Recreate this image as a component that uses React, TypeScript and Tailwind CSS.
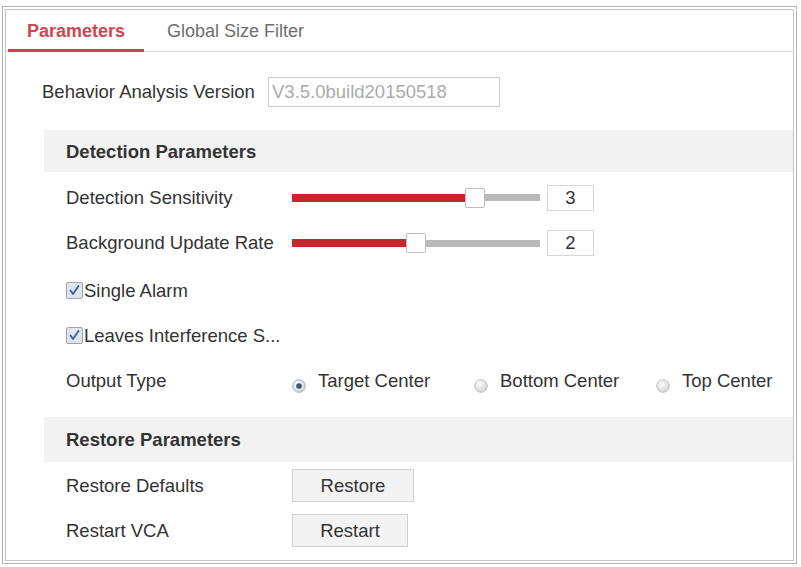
import React from "react";

const font = { fontFamily: '"Liberation Sans", Arial, sans-serif' };

function Slider({ fill }: { fill: number }) {
  return (
    <div className="relative w-[248px] h-[20px] flex items-center">
      <div className="w-full h-[7px] bg-[#b9b9b9]" />
      <div className="absolute left-0 top-[6px] h-[8px] bg-[#c7262e]" style={{ width: fill }} />
      <div
        className="absolute top-0 w-[20px] h-[20px] bg-white border border-[#bdbdbd] rounded-[2px]"
        style={{ left: fill - 1 }}
      />
    </div>
  );
}

function Checkbox() {
  return (
    <span className="w-[17px] h-[17px] border border-[#9ea7b3] bg-[#dfe5ec] rounded-[2px] flex items-center justify-center">
      <svg width="13" height="13" viewBox="0 0 13 13">
        <path d="M2.5 6.5 L5 10 L10.5 2" fill="none" stroke="#3b5f9c" strokeWidth="1.8" strokeLinecap="round" strokeLinejoin="round" />
      </svg>
    </span>
  );
}

function Radio({ on }: { on?: boolean }) {
  return (
    <svg width="14" height="14" viewBox="0 0 14 14" className="mt-[10px]">
      <defs>
        <radialGradient id={on ? "rg1" : "rg0"} cx="0.4" cy="0.35" r="0.7">
          <stop offset="0" stopColor="#ffffff" />
          <stop offset="1" stopColor={on ? "#c9d0d6" : "#cfcfcf"} />
        </radialGradient>
      </defs>
      <circle cx="7" cy="7" r="6.3" fill={`url(#${on ? "rg1" : "rg0"})`} stroke={on ? "#a8b2bb" : "#c4c4c4"} strokeWidth="1" />
      {on && <circle cx="7" cy="7" r="2.8" fill="#3e5466" />}
    </svg>
  );
}

function Row({ label, children, h = "h-[45px]" }: { label: string; children?: React.ReactNode; h?: string }) {
  return (
    <div className={`flex items-center ${h}`}>
      <div className="w-[226px] shrink-0">{label}</div>
      {children}
    </div>
  );
}

export default function App() {
  return (
    <div className="w-[801px] h-[567px] bg-white text-[18.5px] text-[#333333]" style={font}>
      <div className="ml-[2px] pt-[6px]">
        <div className="w-[795px] h-[558px] border border-[#b4b4b4] p-[2px]">
          <div className="w-full h-full border border-[#c4c4c4] flex flex-col">
            {/* Tabs */}
            <div className="flex items-end h-[42px] border-b border-[#dddddd] pl-[2px]">
              <div className="w-[136px] h-[42px] flex items-center justify-center pt-[3px] border-b-[3px] border-[#d0404a] mb-[-1px] text-[#d04650] font-bold text-[18px]">
                Parameters
              </div>
              <div className="h-[42px] flex items-center ml-[23px] text-[#6e6e6e] pt-[2px] text-[18px]">Global Size Filter</div>
            </div>

            {/* Version */}
            <div className="flex items-center pl-[36px] mt-[25px]">
              <span className="w-[226px] shrink-0">Behavior Analysis Version</span>
              <div className="w-[232px] h-[30px] border border-[#cccccc] flex items-center pl-[3px] text-[#ababab]">
                V3.5.0build20150518
              </div>
            </div>

            {/* Detection header */}
            <div className="ml-[38px] mt-[23px] h-[42px] bg-[#f2f2f2] flex items-center pl-[22px] pt-[1px] font-bold">
              Detection Parameters
            </div>

            <div className="ml-[60px] mt-[3px]">
              <Row label="Detection Sensitivity">
                <Slider fill={174} />
                <div className="ml-[7px] w-[47px] h-[26px] border border-[#d6d6d6] flex items-center justify-center">3</div>
              </Row>
              <Row label="Background Update Rate" h="h-[46px]">
                <Slider fill={115} />
                <div className="ml-[7px] w-[47px] h-[26px] border border-[#d6d6d6] flex items-center justify-center">2</div>
              </Row>
              <div className="flex items-center h-[47px] pt-[2px]">
                <Checkbox />
                <span className="ml-[1px]">Single Alarm</span>
              </div>
              <div className="flex items-center h-[45px]">
                <Checkbox />
                <span className="ml-[1px]">Leaves Interference S...</span>
              </div>
              <Row label="Output Type">
                <div className="flex items-center w-[182px]">
                  <Radio on />
                  <span className="ml-[12px]">Target Center</span>
                </div>
                <div className="flex items-center w-[182px]">
                  <Radio />
                  <span className="ml-[12px]">Bottom Center</span>
                </div>
                <div className="flex items-center">
                  <Radio />
                  <span className="ml-[12px]">Top Center</span>
                </div>
              </Row>
            </div>

            {/* Restore header */}
            <div className="ml-[38px] mt-[14px] h-[45px] bg-[#f2f2f2] flex items-center pl-[22px] pt-[1px] font-bold">
              Restore Parameters
            </div>

            <div className="ml-[60px] mt-[1px]">
              <Row label="Restore Defaults">
                <div className="w-[122px] h-[33px] bg-[#f3f3f3] border border-[#d2d2d2] flex items-center justify-center">Restore</div>
              </Row>
              <Row label="Restart VCA">
                <div className="w-[116px] h-[33px] bg-[#f3f3f3] border border-[#d2d2d2] flex items-center justify-center">Restart</div>
              </Row>
            </div>
          </div>
        </div>
      </div>
    </div>
  );
}
